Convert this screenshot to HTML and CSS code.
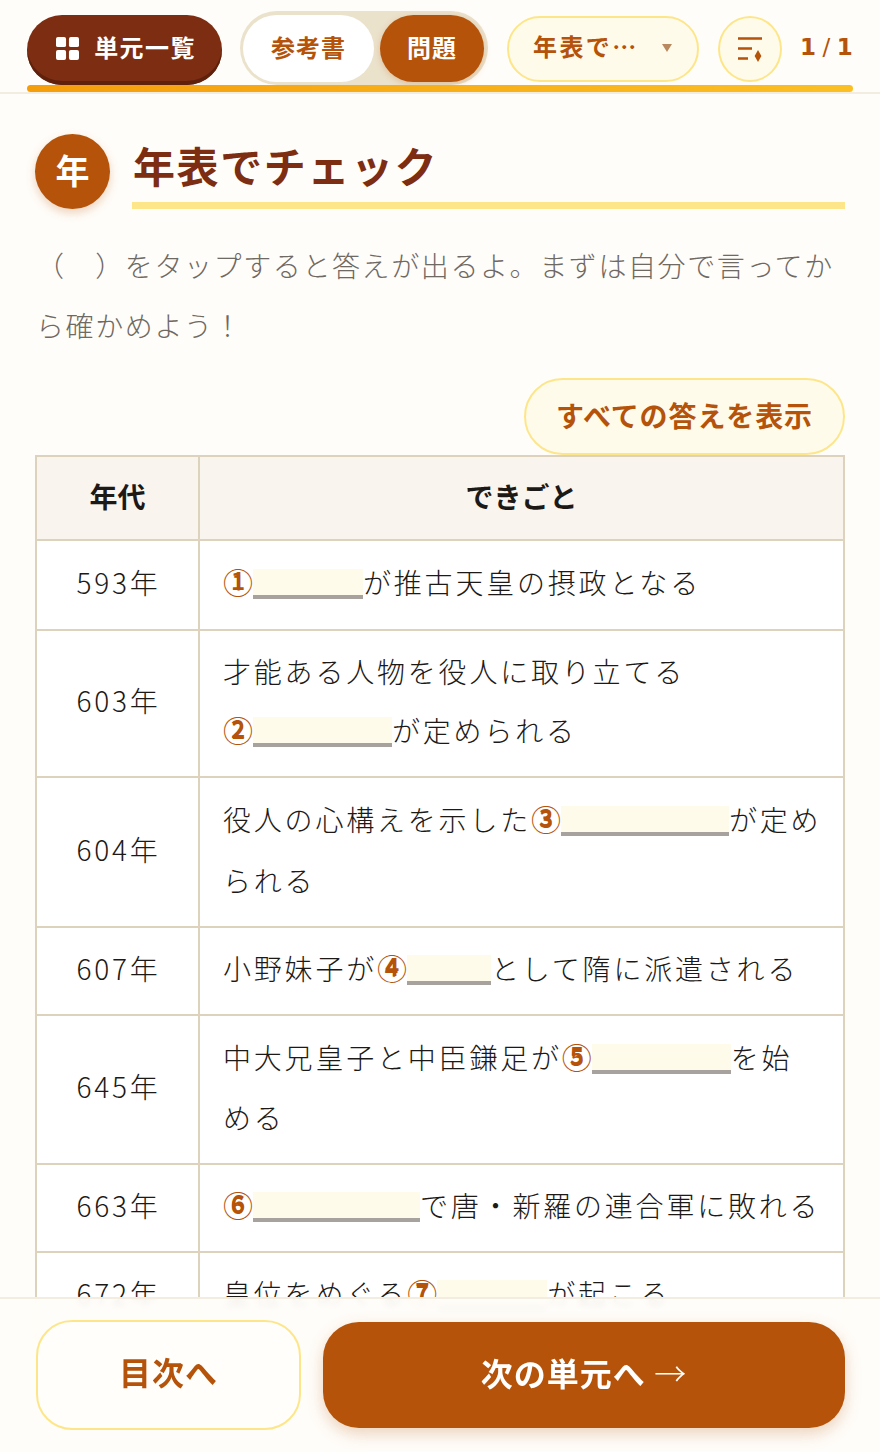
FILE: index.html
```html
<!DOCTYPE html>
<html lang="ja">
<head>
<meta charset="utf-8">
<title>年表でチェック</title>
<link rel="stylesheet" href="styles.css">
</head>
<body>
<div class="app">
  <header class="topbar">
    <button class="unit-btn">
      <svg class="grid-icon" viewBox="0 0 24 24"><rect x="0" y="0" width="10.5" height="10.5" rx="2"/><rect x="13.5" y="0" width="10.5" height="10.5" rx="2"/><rect x="0" y="13.5" width="10.5" height="10.5" rx="2"/><rect x="13.5" y="13.5" width="10.5" height="10.5" rx="2"/></svg>
      <span>単元一覧</span>
    </button>
    <div class="tabs">
      <span class="tab tab-off">参考書</span>
      <span class="tab tab-on">問題</span>
    </div>
    <div class="select"><span>年表で…</span><i class="caret"></i></div>
    <button class="round-btn">
      <svg viewBox="0 0 26 26" class="sort-icon"><path d="M1 2.5h24M1 12.5h14M1 22.5h10" /><path class="fill" d="M21 14l3.4 6-3.4 6-3.4-6z"/></svg>
    </button>
    <span class="pager">1 <span class="slash">/</span> 1</span>
    <div class="progress"></div>
  </header>

  <main class="content">
    <section class="heading">
      <div class="badge">年</div>
      <h1 class="title">年表でチェック</h1>
    </section>
    <p class="lead">（　）をタップすると答えが出るよ。まずは自分で言ってから確かめよう！</p>
    <div class="actions"><button class="show-all">すべての答えを表示</button></div>
    <table class="timeline">
      <colgroup><col class="col-year"><col></colgroup>
      <thead><tr><th>年代</th><th>できごと</th></tr></thead>
      <tbody>
        <tr><td class="year">593年</td><td class="ev lh61"><span class="num" data-d="1">①</span><span class="blank w110"></span>が推古天皇の摂政となる</td></tr>
        <tr><td class="year">603年</td><td class="ev">才能ある人物を役人に取り立てる<br><span class="num" data-d="2">②</span><span class="blank w139"></span>が定められる</td></tr>
        <tr><td class="year">604年</td><td class="ev lh60h">役人の心構えを示した<span class="num" data-d="3">③</span><span class="blank w168"></span>が定められる</td></tr>
        <tr><td class="year">607年</td><td class="ev">小野妹子が<span class="num" data-d="4">④</span><span class="blank w84"></span>として隋に派遣される</td></tr>
        <tr><td class="year">645年</td><td class="ev lh60">中大兄皇子と中臣鎌足が<span class="num" data-d="5">⑤</span><span class="blank w139"></span>を始める</td></tr>
        <tr><td class="year">663年</td><td class="ev"><span class="num" data-d="6">⑥</span><span class="blank w167"></span>で唐・新羅の連合軍に敗れる</td></tr>
        <tr><td class="year">672年</td><td class="ev">皇位をめぐる<span class="num" data-d="7">⑦</span><span class="blank w110"></span>が起こる</td></tr>
      </tbody>
    </table>
  </main>

  <footer class="bottom">
    <button class="foot-btn toc">目次へ</button>
    <button class="foot-btn next">次の単元へ <span class="arrow">→</span></button>
  </footer>
</div>
</body>
</html>
```
FILE: styles.css
```css
* { box-sizing: border-box; }
html, body { margin: 0; height: 100%; }
body {
  background: #fffdf9;
  color: #1c1917;
  font-family: "Noto Sans CJK JP", "Noto Sans", sans-serif;
}
button { font-family: inherit; }
.app {
  position: relative;
  height: 1452px;
  overflow: hidden;
  display: flex;
  flex-direction: column;
}
.topbar {
  position: relative;
  flex: none;
  height: 94px;
  padding: 11px 27px 0;
  display: flex;
  align-items: flex-start;
  border-bottom: 2px solid #f3ece0;
}
.unit-btn {
  flex: none;
  margin-top: 4px;
  width: 195px;
  height: 70px;
  padding: 0 0 8px 3px;
  border: 0;
  border-radius: 35px;
  background: #7c2d12;
  box-shadow: inset 0 -4px 0 #5f210c;
  color: #fff;
  font-size: 24px;
  font-weight: 700;
  letter-spacing: 1.4px;
  display: flex;
  align-items: center;
  justify-content: center;
  gap: 15px;
}
.grid-icon { width: 23px; height: 23px; fill: #fff; margin-top: 4px; }
.tabs {
  flex: none;
  margin-left: 18px;
  width: 248px;
  height: 74px;
  padding: 4px 3px;
  border-radius: 37px;
  background: #ebe2cc;
  display: flex;
  gap: 6px;
}
.tab {
  height: 67px;
  padding-bottom: 4px;
  border-radius: 34px;
  font-size: 24px;
  font-weight: 700;
  display: flex;
  align-items: center;
  justify-content: center;
  letter-spacing: 1px;
}
.tab-off { width: 131px; background: #fff; color: #b45309; }
.tab-on { width: 104px; background: #b45309; color: #fff; box-shadow: 0 2px 6px rgba(180, 83, 9, .25); }
.select {
  flex: none;
  margin: 5px 0 0 19px;
  width: 192px;
  height: 66px;
  padding: 0 25px 8px 24px;
  border: 2px solid #fde68a;
  border-radius: 33px;
  background: #fffbeb;
  color: #b45309;
  font-size: 24px;
  font-weight: 700;
  letter-spacing: 2.4px;
  display: flex;
  align-items: center;
  justify-content: space-between;
}
.caret {
  width: 0;
  height: 0;
  margin-top: 6px;
  border-left: 5px solid transparent;
  border-right: 5px solid transparent;
  border-top: 8px solid #b98a60;
}
.round-btn {
  flex: none;
  margin: 5px 0 0 19px;
  width: 64px;
  height: 66px;
  padding: 0;
  border: 2px solid #fde68a;
  border-radius: 50%;
  background: #fffbeb;
  display: flex;
  align-items: center;
  justify-content: center;
}
.sort-icon { width: 26px; height: 26px; fill: none; stroke: #b45309; stroke-width: 2.6; }
.sort-icon .fill { fill: #b45309; stroke: none; }
.pager {
  flex: none;
  margin: 18px 0 0 18px;
  color: #b45309;
  font-family: "DejaVu Sans", sans-serif;
  font-size: 23px;
  font-weight: 700;
  line-height: 36px;
  word-spacing: -1.5px;
  white-space: nowrap;
}
.slash { font-weight: 400; }
.progress {
  position: absolute;
  left: 27px;
  right: 27px;
  bottom: 0;
  height: 7px;
  border-radius: 4px;
  background: linear-gradient(90deg, #f59e0b, #fbbf24);
}
.content {
  flex: 1;
  min-height: 0;
  overflow: hidden;
  padding: 40px 35px 0 36px;
}
.heading { display: flex; align-items: flex-start; gap: 22px; margin-left: -1px; }
.badge {
  flex: none;
  width: 75px;
  height: 75px;
  padding-bottom: 5px;
  border-radius: 50%;
  background: #b45309;
  color: #fff;
  font-size: 34px;
  font-weight: 700;
  display: flex;
  align-items: center;
  justify-content: center;
  box-shadow: 0 4px 10px rgba(180, 83, 9, .25);
}
.title {
  flex: 1;
  margin: 0;
  height: 75px;
  padding-left: 1px;
  border-bottom: 7px solid #fde68a;
  color: #7c2d12;
  font-size: 42px;
  font-weight: 700;
  line-height: 62px;
  letter-spacing: 1.6px;
}
.lead {
  margin: 26px 0 0;
  color: #6f6963;
  font-size: 28px;
  font-weight: 300;
  line-height: 60px;
  letter-spacing: 1.6px;
}
.actions { display: flex; justify-content: flex-end; margin-top: 23px; }
.show-all {
  width: 321px;
  height: 77px;
  padding: 0 0 4px;
  border: 2px solid #fde68a;
  border-radius: 39px;
  background: #fffbeb;
  color: #b45309;
  font-size: 28px;
  font-weight: 700;
  letter-spacing: .9px;
}
.timeline {
  width: 810px;
  margin: 0 0 0 -1px;
  border-collapse: collapse;
  table-layout: fixed;
  background: #fff;
}
.col-year { width: 163px; }
.timeline th, .timeline td { border: 2px solid #ddd3bd; }
.timeline th {
  height: 84px;
  padding-bottom: 6px;
  background: #f9f5ee;
  color: #1c1917;
  font-size: 28px;
  font-weight: 700;
  text-align: center;
}
.year {
  padding: 0 0 7px 2px;
  text-align: center;
  font-size: 28px;
  font-weight: 300;
  letter-spacing: 2.8px;
}
.ev {
  padding: 11px 21px 16px 23px;
  font-size: 28px;
  font-weight: 300;
  line-height: 59px;
  letter-spacing: 2.8px;
}
.lh60 { line-height: 60px; }
.lh60h { line-height: 60.5px; }
.lh61 { line-height: 61px; }
.num {
  position: relative;
  color: #b45309;
  font-size: 30px;
  font-weight: 400;
  line-height: 1;
  letter-spacing: 0;
}
.num::after {
  content: attr(data-d);
  position: absolute;
  left: 0;
  right: 0;
  top: 6px;
  text-align: center;
  font-size: 24px;
  line-height: 30px;
  font-weight: 700;
}
.blank {
  display: inline-block;
  height: 30px;
  vertical-align: -5px;
  background: #fffbeb;
  border-bottom: 4px solid #a8a29e;
}
.w84 { width: 84px; }
.w110 { width: 110px; }
.w139 { width: 139px; }
.w167 { width: 167px; }
.w168 { width: 168px; }
.bottom {
  position: absolute;
  left: 0;
  right: 0;
  bottom: 0;
  height: 155px;
  padding: 21px 35px 0 36px;
  border-top: 2px solid #f3ece0;
  background: rgba(255, 253, 249, .92);
  backdrop-filter: blur(3px);
  display: flex;
  align-items: flex-start;
  gap: 22px;
}
.foot-btn {
  flex: none;
  height: 110px;
  padding: 0 0 8px;
  font-size: 32px;
  font-weight: 700;
  letter-spacing: 1px;
  border-radius: 36px;
}
.toc {
  width: 265px;
  border: 2px solid #fde68a;
  background: #fffefb;
  color: #b45309;
}
.next {
  flex: 1;
  margin-top: 2px;
  height: 106px;
  padding-bottom: 6px;
  border: 0;
  background: #b45309;
  color: #fff;
  box-shadow: 0 6px 16px rgba(180, 83, 9, .25);
}
.arrow { font-weight: 300; }
```
